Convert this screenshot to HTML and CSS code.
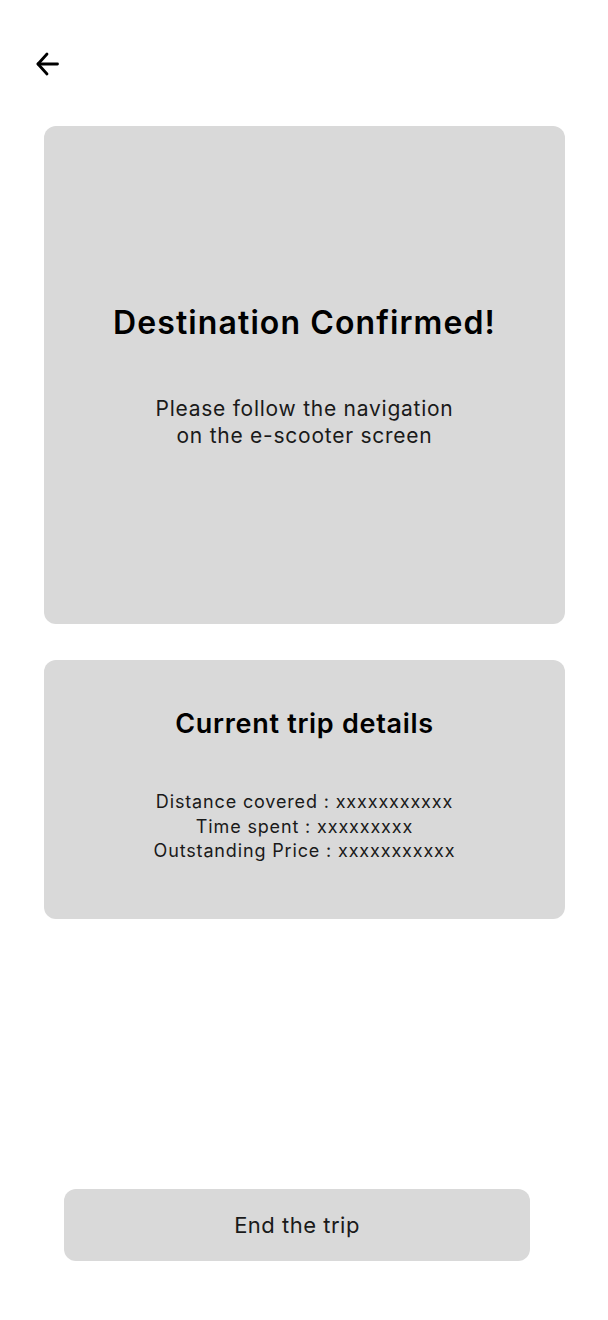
FILE: index.html
```html
<!DOCTYPE html>
<html lang="en">
<head>
    <meta charset="UTF-8">
    <meta name="viewport" content="width=device-width, initial-scale=1.0">
    <title>Trip in progress</title>
    <link rel="stylesheet" href="styles.css">
</head>
<body>
    <div class="screen">
        <header class="top-bar">
            <button class="back-btn" aria-label="Back">
                <svg width="24" height="24" viewBox="0 0 24 24" fill="none" stroke="#000" stroke-width="2.8" stroke-linecap="round" stroke-linejoin="round">
                    <path d="M22.5 12H3"/>
                    <path d="M12 2L3 12L12 22"/>
                </svg>
            </button>
        </header>

        <section class="card confirm-card">
            <h1 class="card-title">Destination Confirmed!</h1>
            <p class="card-text">Please follow the navigation<br>on the e-scooter screen</p>
        </section>

        <section class="card details-card">
            <h2 class="details-title">Current trip details</h2>
            <div class="details-list">
                <p>Distance covered : xxxxxxxxxxx</p>
                <p>Time spent : xxxxxxxxx</p>
                <p>Outstanding Price : xxxxxxxxxxx</p>
            </div>
        </section>

        <div class="spacer"></div>

        <button class="end-btn" type="button">End the trip</button>
    </div>
</body>
</html>
```

FILE: styles.css
```css
body {
    margin: 0;
    background: #fff;
    font-family: Inter, "Noto Sans", sans-serif;
    color: #000;
}
.screen {
    width: 608px;
    height: 1320px;
    display: flex;
    flex-direction: column;
}
.top-bar {
    height: 126px;
    padding: 52px 0 0 35px;
    box-sizing: border-box;
}
.back-btn {
    background: none;
    border: none;
    padding: 0;
    width: 24px;
    height: 24px;
    cursor: pointer;
}
.back-btn svg {
    display: block;
}
.card {
    background: #d9d9d9;
    border-radius: 12px;
    margin-left: 44px;
    width: 521px;
    box-sizing: border-box;
    display: flex;
    flex-direction: column;
    align-items: center;
    text-align: center;
}
.confirm-card {
    height: 498px;
    padding-top: 178px;
}
.card-title {
    margin: 0;
    font-size: 32px;
    font-weight: 600;
    line-height: 38px;
    letter-spacing: 1.1px;
}
.card-text {
    margin: 53px 0 0;
    font-size: 21px;
    line-height: 27px;
    letter-spacing: 0.75px;
    color: #1a1a1a;
}
.details-card {
    margin-top: 36px;
    height: 259px;
    padding-top: 48px;
}
.details-title {
    margin: 0;
    font-size: 27px;
    font-weight: 600;
    line-height: 32px;
    letter-spacing: 0.7px;
}
.details-list {
    margin-top: 50px;
    font-size: 18px;
    line-height: 24.5px;
    letter-spacing: 0.85px;
    color: #1a1a1a;
}
.details-list p {
    margin: 0;
}
.spacer {
    flex: 1;
}
.end-btn {
    margin: 0 0 59px 64px;
    width: 466px;
    height: 72px;
    border: none;
    border-radius: 12px;
    background: #d9d9d9;
    font-family: Inter, "Noto Sans", sans-serif;
    font-size: 22px;
    letter-spacing: 0.5px;
    color: #1a1a1a;
    cursor: pointer;
}
```
